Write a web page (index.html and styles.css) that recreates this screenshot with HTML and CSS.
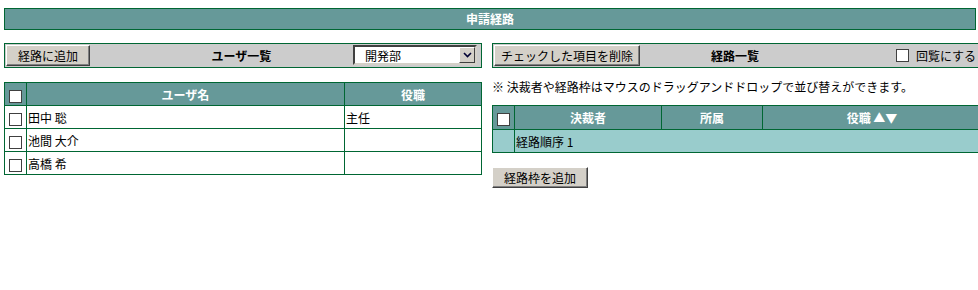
FILE: index.html
```html
<!DOCTYPE html>
<html lang="ja">
<head>
<meta charset="UTF-8">
<title>申請経路</title>
<link rel="stylesheet" href="styles.css">
</head>
<body>
<div class="page">
  <div class="title-bar">申請経路</div>

  <div class="columns">
    <!-- left: user list -->
    <div class="col">
      <div class="toolbar toolbar-left">
        <button type="button" class="btn btn-add">経路に追加</button>
        <span class="toolbar-title">ユーザ一覧</span>
        <div class="select-box">
          <span class="select-value">開発部</span>
          <span class="select-arrow">
            <svg width="9" height="6" viewBox="0 0 9 6"><path d="M1 1 L4.5 4.5 L8 1" fill="none" stroke="#000033" stroke-width="1.6"/></svg>
          </span>
        </div>
      </div>

      <table class="grid user-grid">
        <tr>
          <th class="chk"><input type="checkbox" class="cb"></th>
          <th>ユーザ名</th>
          <th class="role">役職</th>
        </tr>
        <tr>
          <td class="chk"><input type="checkbox" class="cb"></td>
          <td>田中&nbsp;聡</td>
          <td>主任</td>
        </tr>
        <tr>
          <td class="chk"><input type="checkbox" class="cb"></td>
          <td>池間&nbsp;大介</td>
          <td></td>
        </tr>
        <tr>
          <td class="chk"><input type="checkbox" class="cb"></td>
          <td>高橋&nbsp;希</td>
          <td></td>
        </tr>
      </table>
    </div>

    <!-- right: route list -->
    <div class="col">
      <div class="toolbar toolbar-right">
        <button type="button" class="btn btn-delete">チェックした項目を削除</button>
        <span class="toolbar-title">経路一覧</span>
        <label class="circulate"><input type="checkbox" class="cb">回覧にする</label>
      </div>

      <p class="note">※ 決裁者や経路枠はマウスのドラッグアンドドロップで並び替えができます。</p>

      <table class="grid route-grid">
        <tr>
          <th class="chk"><input type="checkbox" class="cb"></th>
          <th class="approver">決裁者</th>
          <th class="dept">所属</th>
          <th>役職&nbsp;▲▼</th>
        </tr>
        <tr class="route-row">
          <td class="chk"></td>
          <td colspan="3">経路順序&nbsp;1</td>
        </tr>
      </table>

      <button type="button" class="btn add-frame">経路枠を追加</button>
    </div>
  </div>
</div>
</body>
</html>
```

FILE: styles.css
```css
html, body {
  margin: 0;
  padding: 0;
  overflow: hidden;
  background: #fff;
}

body {
  font-family: "Noto Sans CJK JP", "Liberation Sans", sans-serif;
  font-size: 12px;
  color: #000;
}

.page {
  width: 982px;
  padding: 8px 0 0 4px;
}

.title-bar {
  width: 970px;
  height: 20px;
  line-height: 20px;
  background-color: #669999;
  border: 1px solid #006633;
  color: #fff;
  font-weight: bold;
  text-align: center;
}

.columns {
  display: grid;
  grid-template-columns: 478px 490px;
  column-gap: 10px;
  margin-top: 13px;
}

/* toolbars */
.toolbar {
  box-sizing: border-box;
  height: 25px;
  background-color: #cccccc;
  border: 1px solid #006633;
  display: grid;
  grid-template-columns: 1fr auto 1fr;
  align-items: center;
  padding: 0 4px 0 1px;
}

.toolbar-title {
  font-weight: bold;
}

.toolbar-right {
  padding-right: 5px;
}

.btn {
  font-family: inherit;
  font-size: 12px;
  color: #000;
  background-color: #d4d0c8;
  border: 1px solid;
  border-color: #fff #404040 #404040 #fff;
  box-shadow: inset -1px -1px #808080;
  height: 21px;
  padding: 0 11px;
  margin: 0;
  justify-self: start;
  line-height: 19px;
}

.btn-delete {
  padding: 0 6px;
}

.select-box {
  justify-self: end;
  box-sizing: border-box;
  width: 124px;
  height: 20px;
  background: #fff;
  border: 2px solid;
  border-color: #404040 #d4d0c8 #d4d0c8 #404040;
  display: flex;
  align-items: center;
  justify-content: space-between;
  margin-top: -1px;
}

.select-value {
  padding-left: 10px;
}

.select-arrow {
  box-sizing: border-box;
  width: 16px;
  height: 16px;
  background: #d4d0c8;
  border: 1px solid;
  border-color: #fff #404040 #404040 #fff;
  display: flex;
  align-items: center;
  justify-content: center;
}

.circulate {
  justify-self: end;
  display: flex;
  align-items: center;
  gap: 7px;
  white-space: nowrap;
}

/* checkboxes */
.cb {
  appearance: none;
  -webkit-appearance: none;
  box-sizing: border-box;
  width: 13px;
  height: 13px;
  margin: 0;
  background: #fff;
  border: 1px solid #404040;
  vertical-align: middle;
}

/* tables */
.grid {
  border-collapse: collapse;
  width: 100%;
  margin-top: 14px;
}

.grid th,
.grid td {
  border: 1px solid #006633;
  height: 22px;
  padding: 0 1px;
  text-align: left;
}

.grid th {
  background-color: #669999;
  color: #fff;
  font-weight: bold;
  text-align: center;
}

.grid .chk {
  width: 21px;
  padding: 0;
  text-align: center;
}

.user-grid th.role {
  width: 134px;
}

.note {
  margin: 12px 0 0 0;
  line-height: 14px;
}

.route-grid {
  margin-top: 11px;
}

.route-grid th {
  height: 23px;
}

.route-grid .approver {
  width: 144px;
}

.route-grid .dept {
  width: 98px;
}

.route-row td {
  background-color: #99cccc;
}

.add-frame {
  margin-top: 14px;
}
```
